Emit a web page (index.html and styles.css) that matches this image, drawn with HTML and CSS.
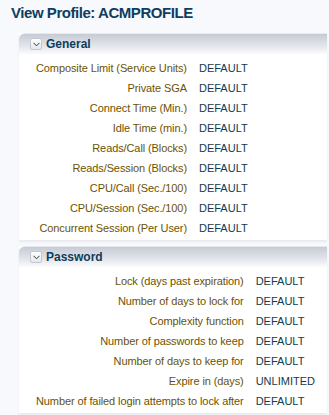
FILE: index.html
```html
<!DOCTYPE html>
<html lang="en">
<head>
    <meta charset="UTF-8">
    <title>View Profile: ACMPROFILE</title>
    <link rel="stylesheet" href="styles.css">
</head>
<body>
    <h1 class="page-title">View Profile: ACMPROFILE</h1>

    <div class="panel">
        <div class="panel-header">
            <span class="toggle"><svg width="7" height="5" viewBox="0 0 7 5"><path d="M0.5 0.8 L3.5 3.8 L6.5 0.8" fill="none" stroke="#333" stroke-width="1"/></svg></span>
            <span class="panel-title">General</span>
        </div>
        <div class="panel-body">
            <div class="label">Composite Limit (Service Units)</div><div class="value">DEFAULT</div>
            <div class="label">Private SGA</div><div class="value">DEFAULT</div>
            <div class="label">Connect Time (Min.)</div><div class="value">DEFAULT</div>
            <div class="label">Idle Time (min.)</div><div class="value">DEFAULT</div>
            <div class="label">Reads/Call (Blocks)</div><div class="value">DEFAULT</div>
            <div class="label">Reads/Session (Blocks)</div><div class="value">DEFAULT</div>
            <div class="label">CPU/Call (Sec./100)</div><div class="value">DEFAULT</div>
            <div class="label">CPU/Session (Sec./100)</div><div class="value">DEFAULT</div>
            <div class="label">Concurrent Session (Per User)</div><div class="value">DEFAULT</div>
        </div>
    </div>

    <div class="panel">
        <div class="panel-header">
            <span class="toggle"><svg width="7" height="5" viewBox="0 0 7 5"><path d="M0.5 0.8 L3.5 3.8 L6.5 0.8" fill="none" stroke="#333" stroke-width="1"/></svg></span>
            <span class="panel-title">Password</span>
        </div>
        <div class="panel-body">
            <div class="label">Lock (days past expiration)</div><div class="value">DEFAULT</div>
            <div class="label">Number of days to lock for</div><div class="value">DEFAULT</div>
            <div class="label">Complexity function</div><div class="value">DEFAULT</div>
            <div class="label">Number of passwords to keep</div><div class="value">DEFAULT</div>
            <div class="label">Number of days to keep for</div><div class="value">DEFAULT</div>
            <div class="label">Expire in (days)</div><div class="value">UNLIMITED</div>
            <div class="label">Number of failed login attempts to lock after</div><div class="value">DEFAULT</div>
        </div>
    </div>
</body>
</html>
```

FILE: styles.css
```css
* {
    box-sizing: border-box;
}

body {
    margin: 0;
    padding: 0 2px 0 19px;
    background: #f7f9fc;
    font-family: 'Liberation Sans', Arial, sans-serif;
    font-size: 11px;
}

.page-title {
    margin: 0 0 0 -8px;
    padding-top: 4px;
    height: 33px;
    font-size: 15px;
    font-weight: bold;
    color: #0f3d5f;
    letter-spacing: -0.45px;
}

.panel {
    background: #fff;
    margin-bottom: 6px;
    box-shadow: 0 2px 2px rgba(0,0,0,0.06);
}

.panel-header {
    display: flex;
    align-items: center;
    height: 21px;
    padding-left: 11px;
    border-top-left-radius: 6px;
    border-top: 1px solid #e6e9ee;
    background: linear-gradient(to bottom, #c7cbd4, #e0e3e9 55%, #fbfbfc);
}

.toggle {
    display: flex;
    align-items: center;
    justify-content: center;
    width: 12px;
    height: 12px;
    margin-right: 4px;
    border: 1px solid #c3c7cf;
    border-radius: 2px;
    background: linear-gradient(to bottom, #ffffff, #e4e7ec);
}

.panel-title {
    font-weight: bold;
    font-size: 12px;
    color: #0d3d5c;
}

.panel-body {
    display: grid;
    grid-template-columns: max-content auto;
    column-gap: 12px;
    padding: 4px 0 2px 17px;
}

.label,
.value {
    line-height: 20px;
}

.label {
    text-align: right;
    color: #6c5200;
    letter-spacing: -0.1px;
}

.value {
    color: #163a4a;
}
```
